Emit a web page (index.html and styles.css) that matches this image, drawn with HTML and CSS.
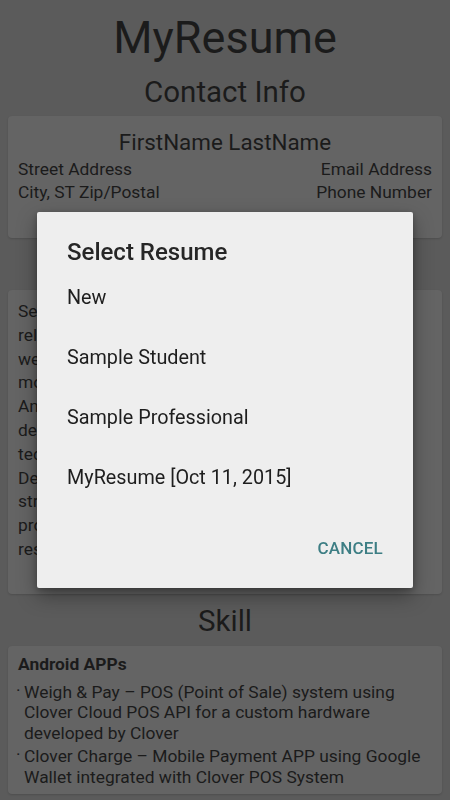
FILE: index.html
```html
<!DOCTYPE html>
<html lang="en">
<head>
<meta charset="utf-8">
<title>MyResume</title>
<link rel="stylesheet" href="styles.css">
</head>
<body>
<main class="page">
  <h1 class="app-title">MyResume</h1>
  <h2 class="section-title">Contact Info</h2>
  <section class="card contact">
    <div class="name">FirstName LastName</div>
    <div class="contact-row"><span>Street Address</span><span>Email Address</span></div>
    <div class="contact-row"><span>City, ST Zip/Postal</span><span>Phone Number</span></div>
  </section>
  <h2 class="section-title">Summary</h2>
  <section class="card summary">
    <p>Senior Software Engineer with 10+ years of<br>
    related experience in developing mobile and<br>
    web applications. Expert at designing and<br>
    modernizing web based applications on<br>
    Android platform. Passionate about<br>
    delivering high quality software using latest<br>
    technologies and best practices.<br>
    Dedicated team player with<br>
    strong communication skills and<br>
    proven ability to analyze and<br>
    resolve complex issues.</p>
  </section>
  <h2 class="section-title">Skill</h2>
  <section class="card skill">
    <div class="skill-head">Android APPs</div>
    <ul class="bullets">
      <li>Weigh &amp; Pay – POS (Point of Sale) system using Clover Cloud POS API for a custom hardware developed by Clover</li>
      <li>Clover Charge – Mobile Payment APP using Google Wallet integrated with Clover POS System</li>
    </ul>
  </section>
</main>
<div class="scrim">
  <div class="dialog">
    <div class="dialog-title">Select Resume</div>
    <ul class="options">
      <li>New</li>
      <li>Sample Student</li>
      <li>Sample Professional</li>
      <li>MyResume [Oct 11, 2015]</li>
    </ul>
    <div class="actions"><span class="btn">CANCEL</span></div>
  </div>
</div>
</body>
</html>
```
FILE: styles.css
```css
html, body {
  margin: 0;
  padding: 0;
  height: 800px;
  overflow: hidden;
}
body {
  background: #5b5b5b;
  font-family: Roboto, "Noto Sans", sans-serif;
  color: #1b1b1b;
}
.page {
  display: flex;
  flex-direction: column;
  padding: 12px 8px 0;
}
.app-title {
  margin: 0;
  font-size: 45px;
  font-weight: 400;
  line-height: 52px;
  text-align: center;
}
.section-title {
  margin: 9px 0 7px;
  font-size: 29.5px;
  font-weight: 400;
  line-height: 36px;
  text-align: center;
}
.app-title + .section-title {
  margin-top: 10px;
  margin-bottom: 6px;
}
.card {
  background: #646464;
  border-radius: 4px;
  box-shadow: 0 1px 2px rgba(0,0,0,0.15);
  padding: 12px 10px;
  font-size: 17.4px;
}
.contact {
  padding-bottom: 34px;
}
.name {
  text-align: center;
  font-size: 22.4px;
  line-height: 28px;
  margin-bottom: 2px;
}
.contact-row {
  display: flex;
  justify-content: space-between;
  line-height: 23px;
}
.summary {
  padding-top: 10px;
  padding-bottom: 32px;
}
.summary p {
  margin: 0;
  line-height: 23.8px;
  white-space: nowrap;
}
.skill {
  padding-top: 7px;
  padding-bottom: 7px;
}
.skill-head {
  font-weight: 700;
  line-height: 23px;
  margin-bottom: 6px;
}
.bullets {
  list-style: none;
  margin: 0;
  padding: 0;
  display: flex;
  flex-direction: column;
  gap: 3px;
}
.bullets li {
  position: relative;
  padding-left: 6px;
  line-height: 20.5px;
}
.bullets li::before {
  content: "·";
  position: absolute;
  left: -2px;
  top: -2px;
}
.scrim {
  position: fixed;
  inset: 0;
}
.dialog {
  position: absolute;
  left: 37px;
  top: 212px;
  width: 376px;
  height: 376px;
  box-sizing: border-box;
  background: #eeeeee;
  border-radius: 2px;
  box-shadow: 0 8px 20px rgba(0,0,0,0.35), 0 2px 6px rgba(0,0,0,0.25);
  padding: 26px 30px 22px;
  display: flex;
  flex-direction: column;
}
.dialog-title {
  font-size: 24px;
  font-weight: 500;
  line-height: 28px;
  color: #262626;
  margin-bottom: 2px;
}
.options {
  list-style: none;
  margin: 0;
  padding: 0;
}
.options li {
  font-size: 19.8px;
  line-height: 60px;
  height: 60px;
  color: #1e1e1e;
}
.actions {
  display: flex;
  justify-content: flex-end;
  margin-top: 22px;
}
.btn {
  font-size: 17px;
  font-weight: 500;
  color: #3d7e84;
  line-height: 36px;
  letter-spacing: 0.2px;
}
```
